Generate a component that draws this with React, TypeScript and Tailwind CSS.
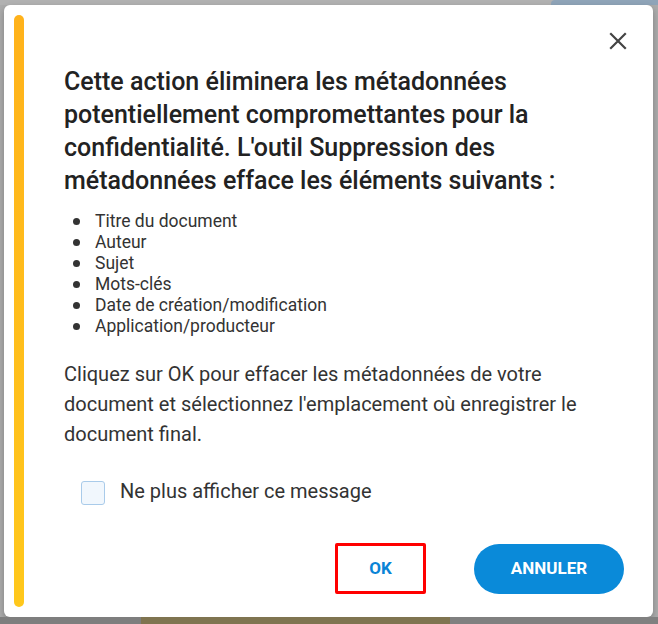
const items = [
  'Titre du document',
  'Auteur',
  'Sujet',
  'Mots-clés',
  'Date de création/modification',
  'Application/producteur',
];

function CloseIcon() {
  return (
    <svg width="18" height="18" viewBox="0 0 18 18" fill="none">
      <path d="M2 2L16 16M16 2L2 16" stroke="#444" strokeWidth="2.2" strokeLinecap="square" />
    </svg>
  );
}

export default function App() {
  return (
    <div
      className="flex h-[624px] w-[658px] flex-col overflow-hidden bg-[#ababab]"
      style={{ fontFamily: 'Roboto, "Noto Sans", sans-serif' }}
    >
      {/* page behind the overlay, top edge */}
      <div className="flex h-[5px] shrink-0 bg-[#b1b1b1]">
        <div className="flex-1" />
        <div className="w-[107px] rounded-tl-[4px] bg-[#8fa4b8]" />
      </div>

      <div className="flex px-[4px]">
        <div className="flex h-[612px] w-[649px] rounded-[6px] bg-white p-[10px] shadow-[0_3px_6px_rgba(0,0,0,0.25)]">
          <div className="w-[10px] shrink-0 rounded-full bg-gradient-to-b from-[#ffb21b] to-[#ffc81c]" />

          <div className="relative flex flex-1 flex-col pl-[40px] pr-[19px]">
            <button className="absolute right-[16px] top-[17px]">
              <CloseIcon />
            </button>

            <h2 className="mt-[50px] max-w-[539px] text-[25px] font-medium leading-[33px] text-[#222]">
              Cette action éliminera les métadonnées potentiellement compromettantes pour la
              confidentialité. L'outil Suppression des métadonnées efface les éléments suivants :
            </h2>

            <ul className="mt-[14px] flex flex-col">
              {items.map((item) => (
                <li key={item} className="flex items-center text-[17.5px] leading-[21px] text-[#333]">
                  <span className="ml-[9px] mr-[15px] h-[7px] w-[7px] rounded-full bg-[#333]" />
                  {item}
                </li>
              ))}
            </ul>

            <p className="mt-[22px] max-w-[539px] text-[20px] leading-[30px] text-[#333]">
              Cliquez sur OK pour effacer les métadonnées de votre document et sélectionnez
              l'emplacement où enregistrer le document final.
            </p>

            <label className="ml-[17px] mt-[32px] flex items-center gap-[15px] text-[20px] leading-[24px] text-[#333]">
              <span className="h-[24px] w-[24px] rounded-[3px] border border-[#a9cbea] bg-[#f1f7fd]" />
              <span className="-mt-[4px]">Ne plus afficher ce message</span>
            </label>

            <div className="mt-auto flex items-center justify-end gap-[48px] pb-[13px]">
              <button className="flex h-[51px] w-[91px] items-center justify-center rounded-[2px] border-[3px] border-[#ff0000] text-[17px] font-bold text-[#0a84d6]">
                OK
              </button>
              <button className="h-[50px] w-[150px] rounded-full bg-[#0a8ad9] text-[17px] font-bold text-white">
                ANNULER
              </button>
            </div>
          </div>
        </div>
      </div>

      {/* page behind the overlay, bottom edge */}
      <div className="flex flex-1">
        <div className="w-[141px] bg-[#7e7e7e]" />
        <div className="w-[309px] bg-[#7f7450]" />
        <div className="flex-1 bg-[#808080]" />
      </div>
    </div>
  );
}
